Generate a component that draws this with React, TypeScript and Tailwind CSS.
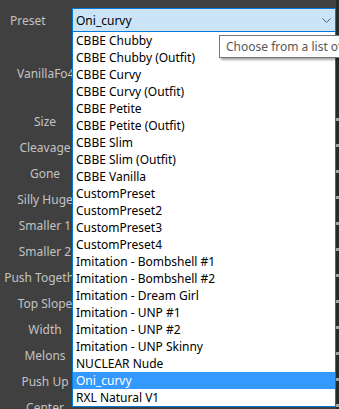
const PRESETS = [
  "CBBE Chubby",
  "CBBE Chubby (Outfit)",
  "CBBE Curvy",
  "CBBE Curvy (Outfit)",
  "CBBE Petite",
  "CBBE Petite (Outfit)",
  "CBBE Slim",
  "CBBE Slim (Outfit)",
  "CBBE Vanilla",
  "CustomPreset",
  "CustomPreset2",
  "CustomPreset3",
  "CustomPreset4",
  "Imitation - Bombshell #1",
  "Imitation - Bombshell #2",
  "Imitation - Dream Girl",
  "Imitation - UNP #1",
  "Imitation - UNP #2",
  "Imitation - UNP Skinny",
  "NUCLEAR Nude",
  "Oni_curvy",
  "RXL Natural V1",
];

const SLIDERS = [
  "Size",
  "Cleavage",
  "Gone",
  "Silly Huge",
  "Smaller 1",
  "Smaller 2",
  "Push Together",
  "Top Slope",
  "Width",
  "Melons",
  "Push Up",
  "Center",
];

const SELECTED = "Oni_curvy";

function SliderRow({ label }: { label: string }) {
  return (
    <div className="flex h-[26px] shrink-0 items-center">
      <div className="w-[90px] shrink-0 text-center whitespace-nowrap text-[#c3c3c3]">{label}</div>
    </div>
  );
}

export default function App() {
  return (
    <div
      className="relative flex h-[409px] w-[339px] overflow-hidden bg-[#404040] text-[12px] leading-[17px]"
      style={{ fontFamily: '"Noto Sans", "Open Sans", sans-serif' }}
    >
      <div className="flex w-[336px] shrink-0 flex-col">
        {/* preset picker row */}
        <div className="mt-[8px] flex h-[24px] shrink-0 items-center">
          <div className="w-[72px] shrink-0 pl-[10px] text-[#c3c3c3]">Preset</div>
          <div className="flex h-full flex-1 items-center justify-between border border-[#0078d7] bg-[#cce4f7] pl-[3px] pr-[4px] text-black">
            <span>{SELECTED}</span>
            <svg width="9" height="6" viewBox="0 0 9 6" className="mt-[1px]">
              <polyline points="0.5,0.5 4.5,4.5 8.5,0.5" fill="none" stroke="#5a5a5a" strokeWidth="1" />
            </svg>
          </div>
        </div>

        <div className="mt-[28px] flex h-[26px] shrink-0 items-center">
          <div className="w-[90px] shrink-0 pl-[17px] whitespace-nowrap text-[#c3c3c3]">VanillaFo4</div>
        </div>

        <div className="mt-[22px] flex shrink-0 flex-col">
          {SLIDERS.map((s) => (
            <SliderRow key={s} label={s} />
          ))}
        </div>
      </div>

      {/* right edge of the slider panel */}
      <div className="flex w-[3px] shrink-0 flex-col bg-[#2a2a2a] pt-[106px]">
        {SLIDERS.map((s) => (
          <div key={s} className="flex h-[26px] shrink-0 items-center">
            <div className="h-[3px] w-full bg-[#a5a5a5]" />
          </div>
        ))}
      </div>

      {/* open dropdown list */}
      <div className="absolute left-[72px] top-[31px] w-[264px] border border-[#0078d7] bg-white">
        {PRESETS.map((p) => (
          <div
            key={p}
            className={
              p === SELECTED
                ? "h-[17px] bg-[#3399ff] pl-[3px] whitespace-nowrap text-white"
                : "h-[17px] pl-[3px] whitespace-nowrap text-black"
            }
          >
            {p}
          </div>
        ))}
      </div>

      {/* tooltip */}
      <div className="absolute left-[219px] top-[35px] h-[23px] w-[140px] overflow-hidden border border-[#767676] bg-white pl-[6px] pt-[2px] whitespace-nowrap text-[#575757] shadow-[2px_2px_2px_rgba(0,0,0,0.35)]">
        Choose from a list of presets
      </div>
    </div>
  );
}
